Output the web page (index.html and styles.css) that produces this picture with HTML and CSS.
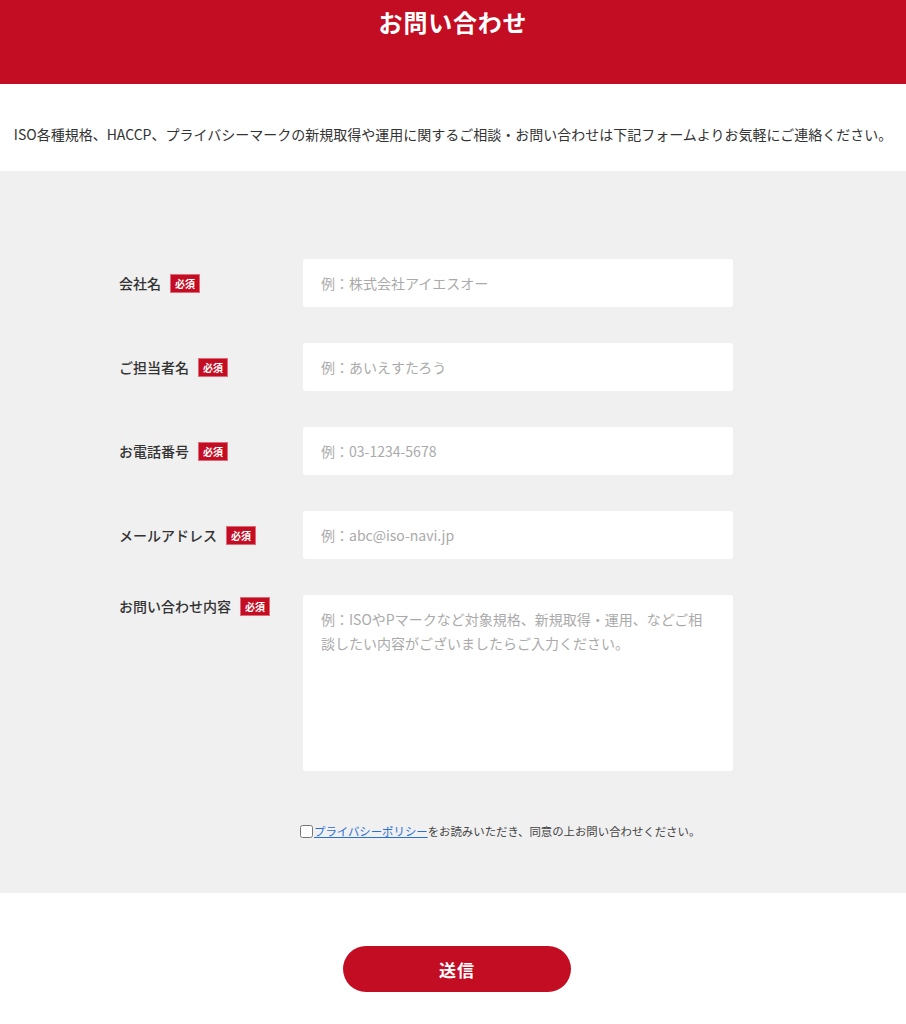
FILE: index.html
```html
<!DOCTYPE html>
<html lang="ja">
<head>
<meta charset="utf-8">
<title>お問い合わせ</title>
<link rel="stylesheet" href="styles.css">
</head>
<body>
<header class="page-head">
  <h1 class="page-title">お問い合わせ</h1>
</header>
<section class="intro">
  <p>ISO各種規格、HACCP、プライバシーマークの新規取得や運用に関するご相談・お問い合わせは下記フォームよりお気軽にご連絡ください。</p>
</section>
<section class="form-area">
  <div class="form">
    <div class="row">
      <div class="label"><span>会社名</span><span class="req">必須</span></div>
      <div class="field"><input type="text" placeholder="例：株式会社アイエスオー"></div>
    </div>
    <div class="row">
      <div class="label"><span>ご担当者名</span><span class="req">必須</span></div>
      <div class="field"><input type="text" placeholder="例：あいえすたろう"></div>
    </div>
    <div class="row">
      <div class="label"><span>お電話番号</span><span class="req">必須</span></div>
      <div class="field"><input type="text" placeholder="例：03-1234-5678"></div>
    </div>
    <div class="row">
      <div class="label"><span>メールアドレス</span><span class="req">必須</span></div>
      <div class="field"><input type="text" placeholder="例：abc@iso-navi.jp"></div>
    </div>
    <div class="row row-top">
      <div class="label label-top"><span>お問い合わせ内容</span><span class="req">必須</span></div>
      <div class="field"><textarea placeholder="例：ISOやPマークなど対象規格、新規取得・運用、などご相談したい内容がございましたらご入力ください。"></textarea></div>
    </div>
    <div class="row agree-row">
      <div class="label"></div>
      <label class="agree"><input type="checkbox"><a href="#">プライバシーポリシー</a>をお読みいただき、同意の上お問い合わせください。</label>
    </div>
  </div>
</section>
<section class="submit-area">
  <button class="submit" type="button">送信</button>
</section>
</body>
</html>
```

FILE: styles.css
```css
* { box-sizing: border-box; }
html, body {
  margin: 0;
  padding: 0;
  background: #fff;
  font-family: "Noto Sans CJK JP", "Noto Sans", sans-serif;
  color: #333;
}
.page-head {
  background: #c30d23;
  height: 84px;
  padding-top: 4px;
  text-align: center;
}
.page-title {
  margin: 0;
  color: #fff;
  font-size: 24px;
  font-weight: 700;
  line-height: 36px;
  letter-spacing: 0.8px;
}
.intro {
  height: 87px;
  display: flex;
  align-items: center;
  justify-content: center;
}
.intro p {
  margin: 0;
  font-size: 14px;
  line-height: 20px;
  color: #333;
  padding-top: 12px;
  white-space: nowrap;
}
.form-area {
  background: #f0f0f0;
  padding: 88px 0 0;
  height: 722px;
}
.form {
  width: 668px;
  margin: 0 auto;
  display: flex;
  flex-direction: column;
  gap: 36px;
}
.row {
  display: grid;
  grid-template-columns: 184px 430px;
  align-items: center;
}
.row-top { align-items: start; }
.label {
  display: flex;
  align-items: center;
  gap: 9px;
  font-size: 14px;
  font-weight: 500;
  color: #333;
  line-height: 20px;
}
.label-top { padding-top: 1px; }
.req {
  display: inline-block;
  background: #c30d23;
  color: #fff;
  font-size: 10px;
  font-weight: 700;
  line-height: 17px;
  padding: 0 4px;
  border: 1px solid #e06a78;
}
.field input,
.field textarea {
  display: block;
  width: 430px;
  border: none;
  border-radius: 3px;
  background: #fff;
  font-family: "Noto Sans CJK JP", "Noto Sans", sans-serif;
  font-size: 14px;
  color: #333;
  outline: none;
}
.field input {
  height: 48px;
  padding: 0 18px;
}
.field textarea {
  height: 176px;
  padding: 12px 18px;
  line-height: 24px;
  resize: none;
}
.field input::placeholder,
.field textarea::placeholder { color: #aaa; }
.agree-row { margin-top: 16px; }
.agree {
  display: flex;
  align-items: center;
  font-size: 11.4px;
  color: #444;
  margin-left: -3px;
  white-space: nowrap;
}
.agree input {
  margin: 0 1px 0 0;
  width: 13px;
  height: 13px;
}
.agree a {
  color: #2a6fd6;
  text-decoration: underline;
}
.submit-area {
  padding-top: 53px;
  display: flex;
  justify-content: center;
}
.submit {
  width: 228px;
  height: 46px;
  margin-left: 8px;
  border: none;
  border-radius: 23px;
  background: #c30d23;
  color: #fff;
  font-family: "Noto Sans CJK JP", "Noto Sans", sans-serif;
  font-size: 17px;
  font-weight: 700;
  letter-spacing: 1px;
}
```
